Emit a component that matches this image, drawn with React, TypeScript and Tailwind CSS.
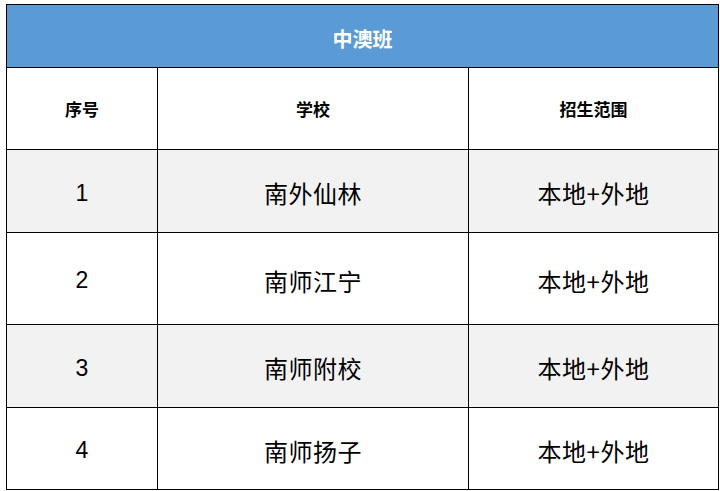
const rows = [
  { no: '1', school: '南外仙林', scope: '本地+外地', h: 'h-[83px]', bg: 'bg-[#f2f2f2]' },
  { no: '2', school: '南师江宁', scope: '本地+外地', h: 'h-[92px]', bg: 'bg-white' },
  { no: '3', school: '南师附校', scope: '本地+外地', h: 'h-[83px]', bg: 'bg-[#f2f2f2]' },
  { no: '4', school: '南师扬子', scope: '本地+外地', h: 'h-[82px]', bg: 'bg-white' },
];

const cjk = "font-['Microsoft_YaHei','Noto_Sans_CJK_SC',sans-serif]";

function Cell({ children, className = '' }: { children: React.ReactNode; className?: string }) {
  return (
    <div className={`flex items-center justify-center border-r border-b border-black ${className}`}>
      {children}
    </div>
  );
}

export default function App() {
  return (
    <div className="h-[491px] w-[720px] bg-white pl-[6px] pt-[4px]">
      <div className={`w-[713px] border-l border-t border-black text-black ${cjk}`}>
        <div className="flex h-[63px] items-center justify-center border-r border-b border-black bg-[#5b9bd5]">
          <span className="pt-[5px] text-[20px] font-bold leading-none text-white">中澳班</span>
        </div>

        <div className="grid h-[82px] grid-cols-[151px_311px_250px]">
          <Cell className="text-[17px] font-bold">序号</Cell>
          <Cell className="text-[17px] font-bold">学校</Cell>
          <Cell className="text-[17px] font-bold">招生范围</Cell>
        </div>

        {rows.map((r) => (
          <div key={r.no} className={`grid grid-cols-[151px_311px_250px] ${r.h} ${r.bg}`}>
            <Cell className="pt-[4px] font-['Liberation_Sans',Arial,sans-serif] text-[23px] leading-none">{r.no}</Cell>
            <Cell className="pt-[4px] text-[24px] leading-none tracking-[0.5px]">{r.school}</Cell>
            <Cell className="pt-[4px] text-[24px] leading-none tracking-[0.5px]">{r.scope}</Cell>
          </div>
        ))}
      </div>
    </div>
  );
}
